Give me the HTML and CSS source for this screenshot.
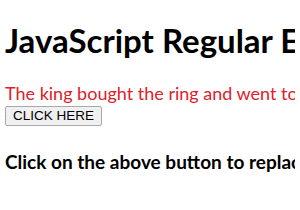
FILE: index.html
```html
<!DOCTYPE html>
<html lang="en">

<head>
    <meta charset="UTF-8">
    <title>JavaScript Regular Expressions</title>
    <link rel="stylesheet" href="styles.css">
</head>

<body>

    <h1>JavaScript Regular Expressions</h1>

    <!-- Sample text -->
    <p id="sample" class="sample">The king bought the ring and went to the palace.</p>

    <button class="click-btn" onclick="replaceWord()">CLICK HERE</button>

    <h3>Click on the above button to replace the word ring with bell</h3>

    <script>
        // Replace "ring" with "bell"
        function replaceWord() {
            const el = document.getElementById('sample');
            el.innerHTML = el.innerHTML.replace(/ring/g, 'bell');
        }
    </script>

</body>

</html>
```

FILE: styles.css
```css
/* Global Styles */
body {
    font-family: 'Lato', sans-serif;
    margin: 0 5px;
    white-space: nowrap;
    overflow: hidden;
    color: #000;
    background: #fff;
}

h1 {
    font-size: 33px;
    line-height: 40px;
    margin: 20px 0 22px;
}

.sample {
    color: #e0202a;
    font-size: 18px;
    line-height: 22px;
    margin: 0;
}

.click-btn {
    font-family: 'Liberation Sans', Arial, sans-serif;
    font-size: 13.5px;
    line-height: 16px;
    padding: 1px 7px;
    margin-top: 1px;
    border: 1px solid #a9a9a9;
    border-radius: 2px;
    background: #f0f0f0;
}

h3 {
    font-size: 19px;
    line-height: 24px;
    margin: 24px 0;
}
```
